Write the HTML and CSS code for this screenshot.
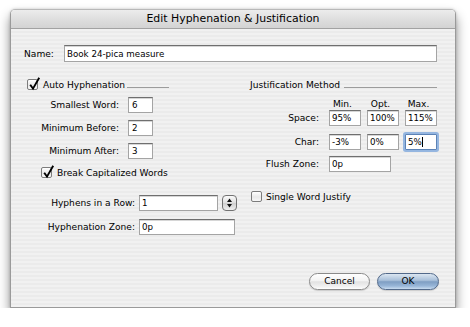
FILE: index.html
```html
<!DOCTYPE html>
<html lang="en">
<head>
    <meta charset="UTF-8">
    <title>Edit Hyphenation &amp; Justification</title>
    <link rel="stylesheet" href="styles.css">
</head>
<body>
    <div class="window">
        <div class="titlebar">Edit Hyphenation &amp; Justification</div>

        <div class="sheet">
            <div class="name-row">
                <span class="label label-name">Name:</span>
                <span class="field field-name">Book 24-pica measure</span>
            </div>

            <div class="columns">
                <!-- left: hyphenation -->
                <div class="col col-left">
                    <div class="group-head">
                        <span class="check checked">
                            <svg viewBox="0 0 14 14" width="14" height="14"><path d="M2.2 5.8 L5 9.6 L11.2 -1.2" fill="none" stroke="#000" stroke-width="1.9"/></svg>
                        </span>
                        <span class="group-title">Auto Hyphenation</span>
                        <span class="rule rule-short"></span>
                    </div>

                    <div class="row row-first">
                        <span class="label label-small">Smallest Word:</span>
                        <span class="field field-tiny">6</span>
                    </div>
                    <div class="row">
                        <span class="label label-small">Minimum Before:</span>
                        <span class="field field-tiny">2</span>
                    </div>
                    <div class="row">
                        <span class="label label-small">Minimum After:</span>
                        <span class="field field-tiny">3</span>
                    </div>

                    <div class="check-row check-indent">
                        <span class="check checked">
                            <svg viewBox="0 0 14 14" width="14" height="14"><path d="M2.2 5.8 L5 9.6 L11.2 -1.2" fill="none" stroke="#000" stroke-width="1.9"/></svg>
                        </span>
                        <span class="check-text">Break Capitalized Words</span>
                    </div>

                    <div class="row row-hyphens">
                        <span class="label label-wide">Hyphens in a Row:</span>
                        <span class="field field-row">1</span>
                        <span class="stepper">
                            <svg viewBox="0 0 15 16" width="15" height="16"><path d="M7.5 3.5 L10 7 L5 7 Z M7.5 12.5 L10 9 L5 9 Z" fill="#111"/></svg>
                        </span>
                    </div>
                    <div class="row row-zone">
                        <span class="label label-wide">Hyphenation Zone:</span>
                        <span class="field field-zone">0p</span>
                    </div>
                </div>

                <!-- right: justification -->
                <div class="col col-right">
                    <div class="group-head">
                        <span class="group-title">Justification Method</span>
                        <span class="rule rule-long"></span>
                    </div>

                    <div class="row row-heads">
                        <span class="label label-just"></span>
                        <span class="head">Min.</span>
                        <span class="head">Opt.</span>
                        <span class="head">Max.</span>
                    </div>
                    <div class="row row-space">
                        <span class="label label-just">Space:</span>
                        <span class="field field-pct">95%</span>
                        <span class="field field-pct">100%</span>
                        <span class="field field-pct">115%</span>
                    </div>
                    <div class="row row-char">
                        <span class="label label-just">Char:</span>
                        <span class="field field-pct">-3%</span>
                        <span class="field field-pct">0%</span>
                        <span class="field field-pct focused">5%<span class="caret"></span></span>
                    </div>
                    <div class="row row-flush">
                        <span class="label label-just">Flush Zone:</span>
                        <span class="field field-flush">0p</span>
                    </div>

                    <div class="check-row check-single">
                        <span class="check"></span>
                        <span class="check-text">Single Word Justify</span>
                    </div>
                </div>
            </div>

            <div class="buttons">
                <span class="btn">Cancel</span>
                <span class="btn btn-default">OK</span>
            </div>
        </div>
    </div>
</body>
</html>
```

FILE: styles.css
```css
body {
    margin: 0;
    background: #ffffff;
    font-family: "DejaVu Sans", "Liberation Sans", sans-serif;
    font-size: 9.1px;
    color: #000;
}
.window {
    margin: 9px 0 0 10px;
    width: 446px;
    height: 299px;
    box-sizing: border-box;
    border: 1px solid #9a9a9a;
    border-top-color: #b8b8b8;
    border-radius: 5px 5px 0 0;
    box-shadow: 0 7px 12px rgba(0, 0, 0, 0.45), 0 0 3px rgba(0, 0, 0, 0.18);
    display: flex;
    flex-direction: column;
    overflow: hidden;
}
.titlebar {
    height: 18px;
    line-height: 17px;
    text-align: center;
    font-size: 10.9px;
    background: linear-gradient(#ececec, #dcdcdc 60%, #d3d3d3);
    border-bottom: 1px solid #a2a2a2;
}
.sheet {
    flex: 1;
    display: flex;
    flex-direction: column;
    padding: 16px 18px 17px 13px;
    background: repeating-linear-gradient(to bottom, #f1f1f1 0, #f1f1f1 2px, #ebebeb 2px, #ebebeb 4px);
}

/* name */
.name-row {
    display: flex;
    align-items: center;
    height: 17px;
}
.label-name {
    width: 40px;
}
.field {
    display: flex;
    align-items: center;
    box-sizing: border-box;
    height: 16px;
    padding: 0 2px;
    background: #fff;
    border: 1px solid #a4a4a4;
    border-top-color: #6f6f6f;
    box-shadow: inset 0 1px 0 #d6d6d6;
    font-size: 8.7px;
    white-space: nowrap;
    flex: none;
}
.field-name {
    flex: 1;
    height: 17px;
}

/* columns */
.columns {
    display: flex;
    margin-top: 16px;
}
.col-left {
    flex: none;
    width: 223px;
    margin-left: 3px;
}
.col-right {
    flex: 1;
    min-width: 0;
}
.group-head,
.check-row {
    display: flex;
    align-items: center;
    height: 13px;
}
.rule {
    align-self: flex-start;
    height: 9px;
    border-bottom: 1px solid #9c9c9c;
}
.rule-short {
    width: 42px;
    margin-left: 2px;
}
.rule-long {
    flex: 1;
    margin-left: 4px;
}
.check {
    position: relative;
    width: 11px;
    height: 11px;
    box-sizing: border-box;
    border: 1px solid #7c7c7c;
    border-radius: 2px;
    background: linear-gradient(#ffffff, #e9e9e9 55%, #f7f7f7);
    margin-right: 5px;
    flex: none;
}
.check svg {
    position: absolute;
    left: 0;
    top: -1px;
    overflow: visible;
}
.check-indent {
    margin-top: 7px;
    padding-left: 14px;
}
.check-single {
    margin-top: 18px;
    padding-left: 1px;
}
.check-single .check {
    margin-right: 4px;
}

.row {
    display: flex;
    align-items: center;
    height: 16px;
    margin-top: 7px;
}
.row-first {
    margin-top: 6px;
}
.label {
    flex: none;
}
.label-small {
    width: 92px;
    margin-right: 9px;
    text-align: right;
}
.field-tiny {
    width: 25px;
    padding-left: 3px;
}
.row-hyphens {
    margin-top: 16px;
}
.row-zone {
    margin-top: 8px;
}
.label-wide {
    width: 108px;
    margin-right: 4px;
    text-align: right;
}
.field-row {
    width: 79px;
}
.field-zone {
    width: 96px;
}
.stepper {
    flex: none;
    width: 15px;
    height: 16px;
    margin-left: 4px;
    box-sizing: border-box;
    border: 1px solid #727272;
    border-radius: 4px;
    background: linear-gradient(#fbfbfb, #dedede 50%, #cfcfcf 52%, #f0f0f0);
    overflow: hidden;
}
.stepper svg {
    display: block;
    margin: -1px 0 0 -1px;
}

/* justification grid */
.label-just {
    width: 69px;
    margin-right: 10px;
    text-align: right;
}
.row-heads {
    height: 13px;
    margin-top: 6px;
}
.head {
    flex: none;
    width: 32px;
    margin-right: 6px;
    padding-right: 5px;
    box-sizing: border-box;
    text-align: center;
}
.row-space {
    margin-top: 0;
}
.row-char {
    margin-top: 8px;
}
.row-flush {
    margin-top: 6px;
}
.field-pct {
    width: 32px;
    margin-right: 6px;
    padding-left: 2px;
}
.field-pct:last-child {
    margin-right: 0;
}
.field-flush {
    width: 62px;
}
.focused {
    border-color: #5c83b6;
    box-shadow: 0 0 0 2px #95b6e0;
    border-radius: 1px;
}
.caret {
    width: 1px;
    height: 10px;
    background: #000;
}

/* buttons */
.buttons {
    margin-top: auto;
    margin-right: -2px;
    display: flex;
    justify-content: flex-end;
    gap: 7px;
}
.btn {
    width: 61px;
    height: 17px;
    box-sizing: border-box;
    border: 1px solid #8a8a8a;
    border-radius: 9px;
    background: linear-gradient(#ffffff, #f3f3f3 45%, #e2e2e2 52%, #f2f2f2 85%, #ffffff);
    box-shadow: 0 1px 1px rgba(0, 0, 0, 0.15);
    text-align: center;
    line-height: 15px;
    font-size: 9px;
}
.btn-default {
    width: 62px;
    border-color: #52698a;
    background: linear-gradient(#dbe6f1, #a9c0da 42%, #7f9ec3 52%, #98b6d8 80%, #c9dcf0);
}
```
